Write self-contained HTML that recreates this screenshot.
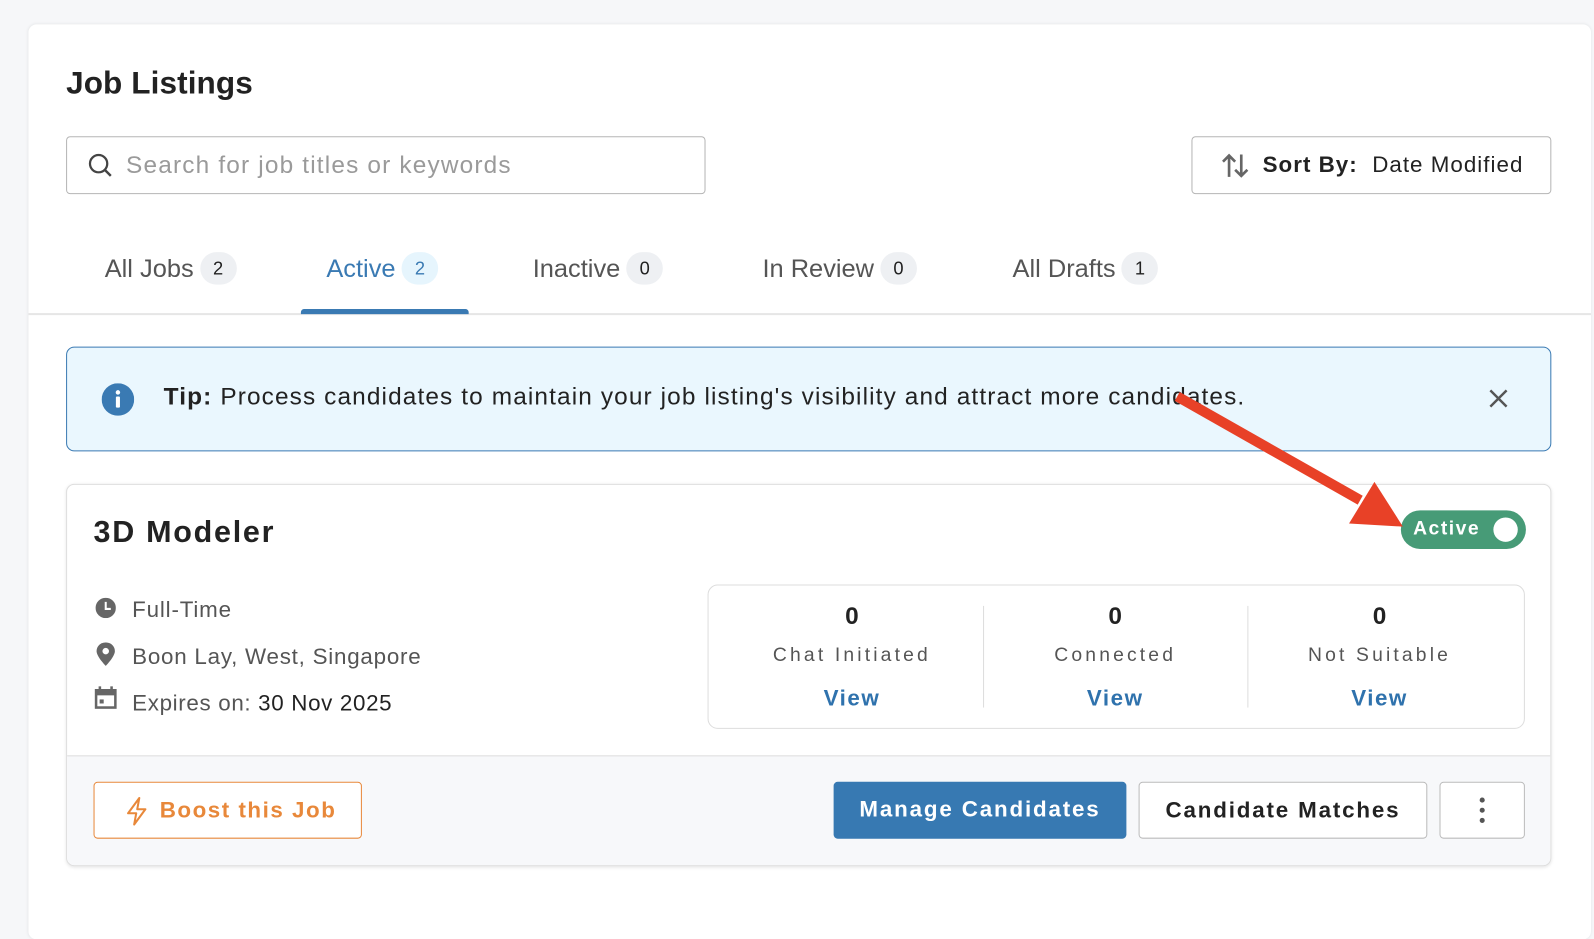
<!DOCTYPE html>
<html><head><meta charset="utf-8"><style>
*{box-sizing:border-box;margin:0;padding:0}
body{width:1594px;height:900px;background:#f6f7f9;font-family:"Liberation Sans",sans-serif;position:relative;overflow:hidden;color:#222}
#w{position:absolute;left:0;top:0;width:1568px;height:900px;transform:scale(1.0166);transform-origin:0 0}
.abs{position:absolute}
.card{left:28px;top:24px;width:1537px;height:900px;background:#fff;border-radius:8px;box-shadow:0 0 3px rgba(0,0,0,.08)}
h1{position:absolute;left:65px;top:64px;font-size:31px;font-weight:bold;color:#222;letter-spacing:.1px}
.search{left:65px;top:134px;width:629px;height:57px;border:1px solid #b5b5b5;border-radius:4px}
.search span{position:absolute;left:58px;top:14px;font-size:24px;color:#9a9a9a;letter-spacing:1.15px;white-space:nowrap}
.sort{left:1172px;top:134px;width:354px;height:57px;border:1px solid #b5b5b5;border-radius:4px;font-size:22px;color:#222;letter-spacing:1px}
.tab{top:250px;font-size:25px;color:#555;white-space:nowrap}
.badge{display:inline-block;background:#eef0f3;border-radius:16px;width:36px;height:32px;line-height:32px;text-align:center;font-size:18px;color:#222;vertical-align:middle;margin-left:6px;position:relative;top:-2px}
.sep{left:28px;top:308px;width:1537px;height:2px;background:#e6e6e6}
.ul{left:296px;top:304px;width:165px;height:5px;background:#3a7ab3;border-radius:3px 3px 0 0}
.tip{left:65px;top:341px;width:1461px;height:103px;background:#eaf7fe;border:1px solid #3a7ab3;border-radius:8px}
.job{left:65px;top:476px;width:1461px;height:376px;border:1px solid #dedede;border-radius:8px;background:#fff;overflow:hidden;box-shadow:0 1px 3px rgba(0,0,0,.1)}
.foot{left:0;top:266px;width:100%;height:110px;background:#f7f8fa;border-top:1px solid #ddd}
.info{font-size:22px;color:#555;left:64px;white-space:nowrap}
.stats{left:630px;top:98px;width:804px;height:142px;border:1px solid #ddd;border-radius:10px}
.col{top:0;width:260px;text-align:center}
.col .n{margin-top:17px;font-size:24px;font-weight:bold;color:#222}
.col .l{margin-top:13px;font-size:19px;letter-spacing:3.1px;color:#555}
.col .v{margin-top:18px;font-size:22px;font-weight:bold;color:#2f72ad;letter-spacing:1.5px}
.btn{top:292px;height:56px;border-radius:4px;font-size:22px;font-weight:bold;text-align:center;line-height:54px;letter-spacing:1.8px;white-space:nowrap}
</style></head><body>
<div id="w">
<div class="abs card"></div>
<h1>Job Listings</h1>
<div class="abs search">
<svg class="abs" style="left:20px;top:15px" width="26" height="26" viewBox="0 0 26 26"><circle cx="11" cy="11" r="8.5" fill="none" stroke="#444" stroke-width="2.2"/><line x1="17.5" y1="17.5" x2="23" y2="23" stroke="#444" stroke-width="2.4"/></svg>
<span>Search for job titles or keywords</span></div>
<div class="abs sort">
<svg class="abs" style="left:28px;top:15px" width="28" height="26" viewBox="0 0 28 26"><path d="M8 24V3M2 9l6-6 6 6" fill="none" stroke="#666" stroke-width="2.6"/><path d="M20 2v21M14 17l6 6 6-6" fill="none" stroke="#666" stroke-width="2.6"/></svg>
<span class="abs" style="left:69px;top:14px;white-space:nowrap"><b>Sort By:</b>&nbsp; Date Modified</span></div>
<div class="abs tab" style="left:103px">All Jobs<span class="badge">2</span></div>
<div class="abs tab" style="left:321px;color:#3a7ab3">Active<span class="badge" style="background:#e6f5fd;color:#3a7ab3">2</span></div>
<div class="abs tab" style="left:524px">Inactive<span class="badge">0</span></div>
<div class="abs tab" style="left:750px">In Review<span class="badge">0</span></div>
<div class="abs tab" style="left:996px">All Drafts<span class="badge">1</span></div>
<div class="abs sep"></div><div class="abs ul"></div>
<div class="abs tip">
<svg class="abs" style="left:34px;top:35px" width="32" height="32" viewBox="0 0 32 32"><circle cx="16" cy="16" r="16" fill="#3a7ab3"/><circle cx="16" cy="9" r="2.2" fill="#fff"/><rect x="14" y="13" width="4" height="11" rx="1" fill="#fff"/></svg>
<div class="abs" style="left:95px;top:35px;font-size:24px;color:#222;white-space:nowrap;letter-spacing:1.1px"><b>Tip:</b> Process candidates to maintain your job listing's visibility and attract more candidates.</div>
<svg class="abs" style="left:1398px;top:40px" width="20" height="20" viewBox="0 0 20 20"><path d="M2 2L18 18M18 2L2 18" stroke="#555" stroke-width="2.4"/></svg>
</div>
<div class="abs job">
<div class="abs" style="left:26px;top:30px;font-size:30px;font-weight:bold;color:#222;letter-spacing:1.7px">3D Modeler</div>
<svg class="abs" style="left:28px;top:111px" width="20" height="20" viewBox="0 0 20 20"><circle cx="10" cy="10" r="10" fill="#666"/><path d="M10 4v7h5" fill="none" stroke="#fff" stroke-width="2"/></svg>
<div class="abs info" style="top:110px;letter-spacing:.8px">Full-Time</div>
<svg class="abs" style="left:28px;top:155px" width="20" height="24" viewBox="0 0 20 24"><path d="M10 0C4.5 0 1 4 1 8.5 1 14 10 23 10 23s9-9 9-14.5C19 4 15.5 0 10 0z" fill="#666"/><circle cx="10" cy="8.5" r="3.2" fill="#fff"/></svg>
<div class="abs info" style="top:156px;letter-spacing:.75px">Boon Lay, West, Singapore</div>
<svg class="abs" style="left:27px;top:198px" width="22" height="23" viewBox="0 0 22 23"><rect x="1.5" y="4" width="19" height="17" fill="none" stroke="#666" stroke-width="2.5"/><rect x="1.5" y="4" width="19" height="5" fill="#666"/><rect x="4" y="0" width="2.5" height="5" fill="#666"/><rect x="15.5" y="0" width="2.5" height="5" fill="#666"/><rect x="5" y="13" width="4" height="4" fill="#666"/></svg>
<div class="abs info" style="top:202px;letter-spacing:.65px">Expires on: <span style="color:#222">30 Nov 2025</span></div>
<div class="abs" style="left:1312px;top:25px;width:123px;height:38px;border-radius:19px;background:#479b77">
<span class="abs" style="left:12px;top:8px;color:#fff;font-size:19px;font-weight:bold;letter-spacing:1.5px">Active</span>
<span class="abs" style="left:91px;top:7px;width:24px;height:24px;border-radius:50%;background:#fff"></span></div>
<div class="abs stats">
<div class="abs col" style="left:11px"><div class="n">0</div><div class="l">Chat Initiated</div><div class="v">View</div></div>
<div class="abs" style="left:270px;top:20px;width:1px;height:100px;background:#ddd"></div>
<div class="abs col" style="left:270px"><div class="n">0</div><div class="l">Connected</div><div class="v">View</div></div>
<div class="abs" style="left:530px;top:20px;width:1px;height:100px;background:#ddd"></div>
<div class="abs col" style="left:530px"><div class="n">0</div><div class="l">Not Suitable</div><div class="v">View</div></div>
</div>
<div class="abs foot"></div>
<div class="abs btn" style="left:26px;width:264px;border:1px solid #e8883a;background:#fff;color:#e8883a;padding-left:40px;letter-spacing:1.5px">
<svg class="abs" style="left:30px;top:14px" width="24" height="28" viewBox="0 0 24 28"><path d="M14 1L3 16h8l-2 11 11-15h-8z" fill="none" stroke="#e8883a" stroke-width="2" stroke-linejoin="round"/></svg>Boost this Job</div>
<div class="abs btn" style="left:754px;width:288px;background:#3779b2;color:#fff">Manage Candidates</div>
<div class="abs btn" style="left:1054px;width:284px;border:1px solid #bbb;background:#fff;color:#222">Candidate Matches</div>
<div class="abs btn" style="left:1350px;width:84px;border:1px solid #bbb;background:#fff">
<svg class="abs" style="left:38px;top:14px" width="6" height="26" viewBox="0 0 6 26"><circle cx="3" cy="3" r="2.5" fill="#555"/><circle cx="3" cy="13" r="2.5" fill="#555"/><circle cx="3" cy="23" r="2.5" fill="#555"/></svg></div>
</div>
<svg class="abs" style="left:0;top:0" width="1568" height="900" viewBox="0 0 1568 900"><line x1="1158" y1="390" x2="1338" y2="492" stroke="#e84127" stroke-width="10"/><polygon points="1352,474 1327,515 1380,518" fill="#e84127"/></svg>
</div>
</body></html>
